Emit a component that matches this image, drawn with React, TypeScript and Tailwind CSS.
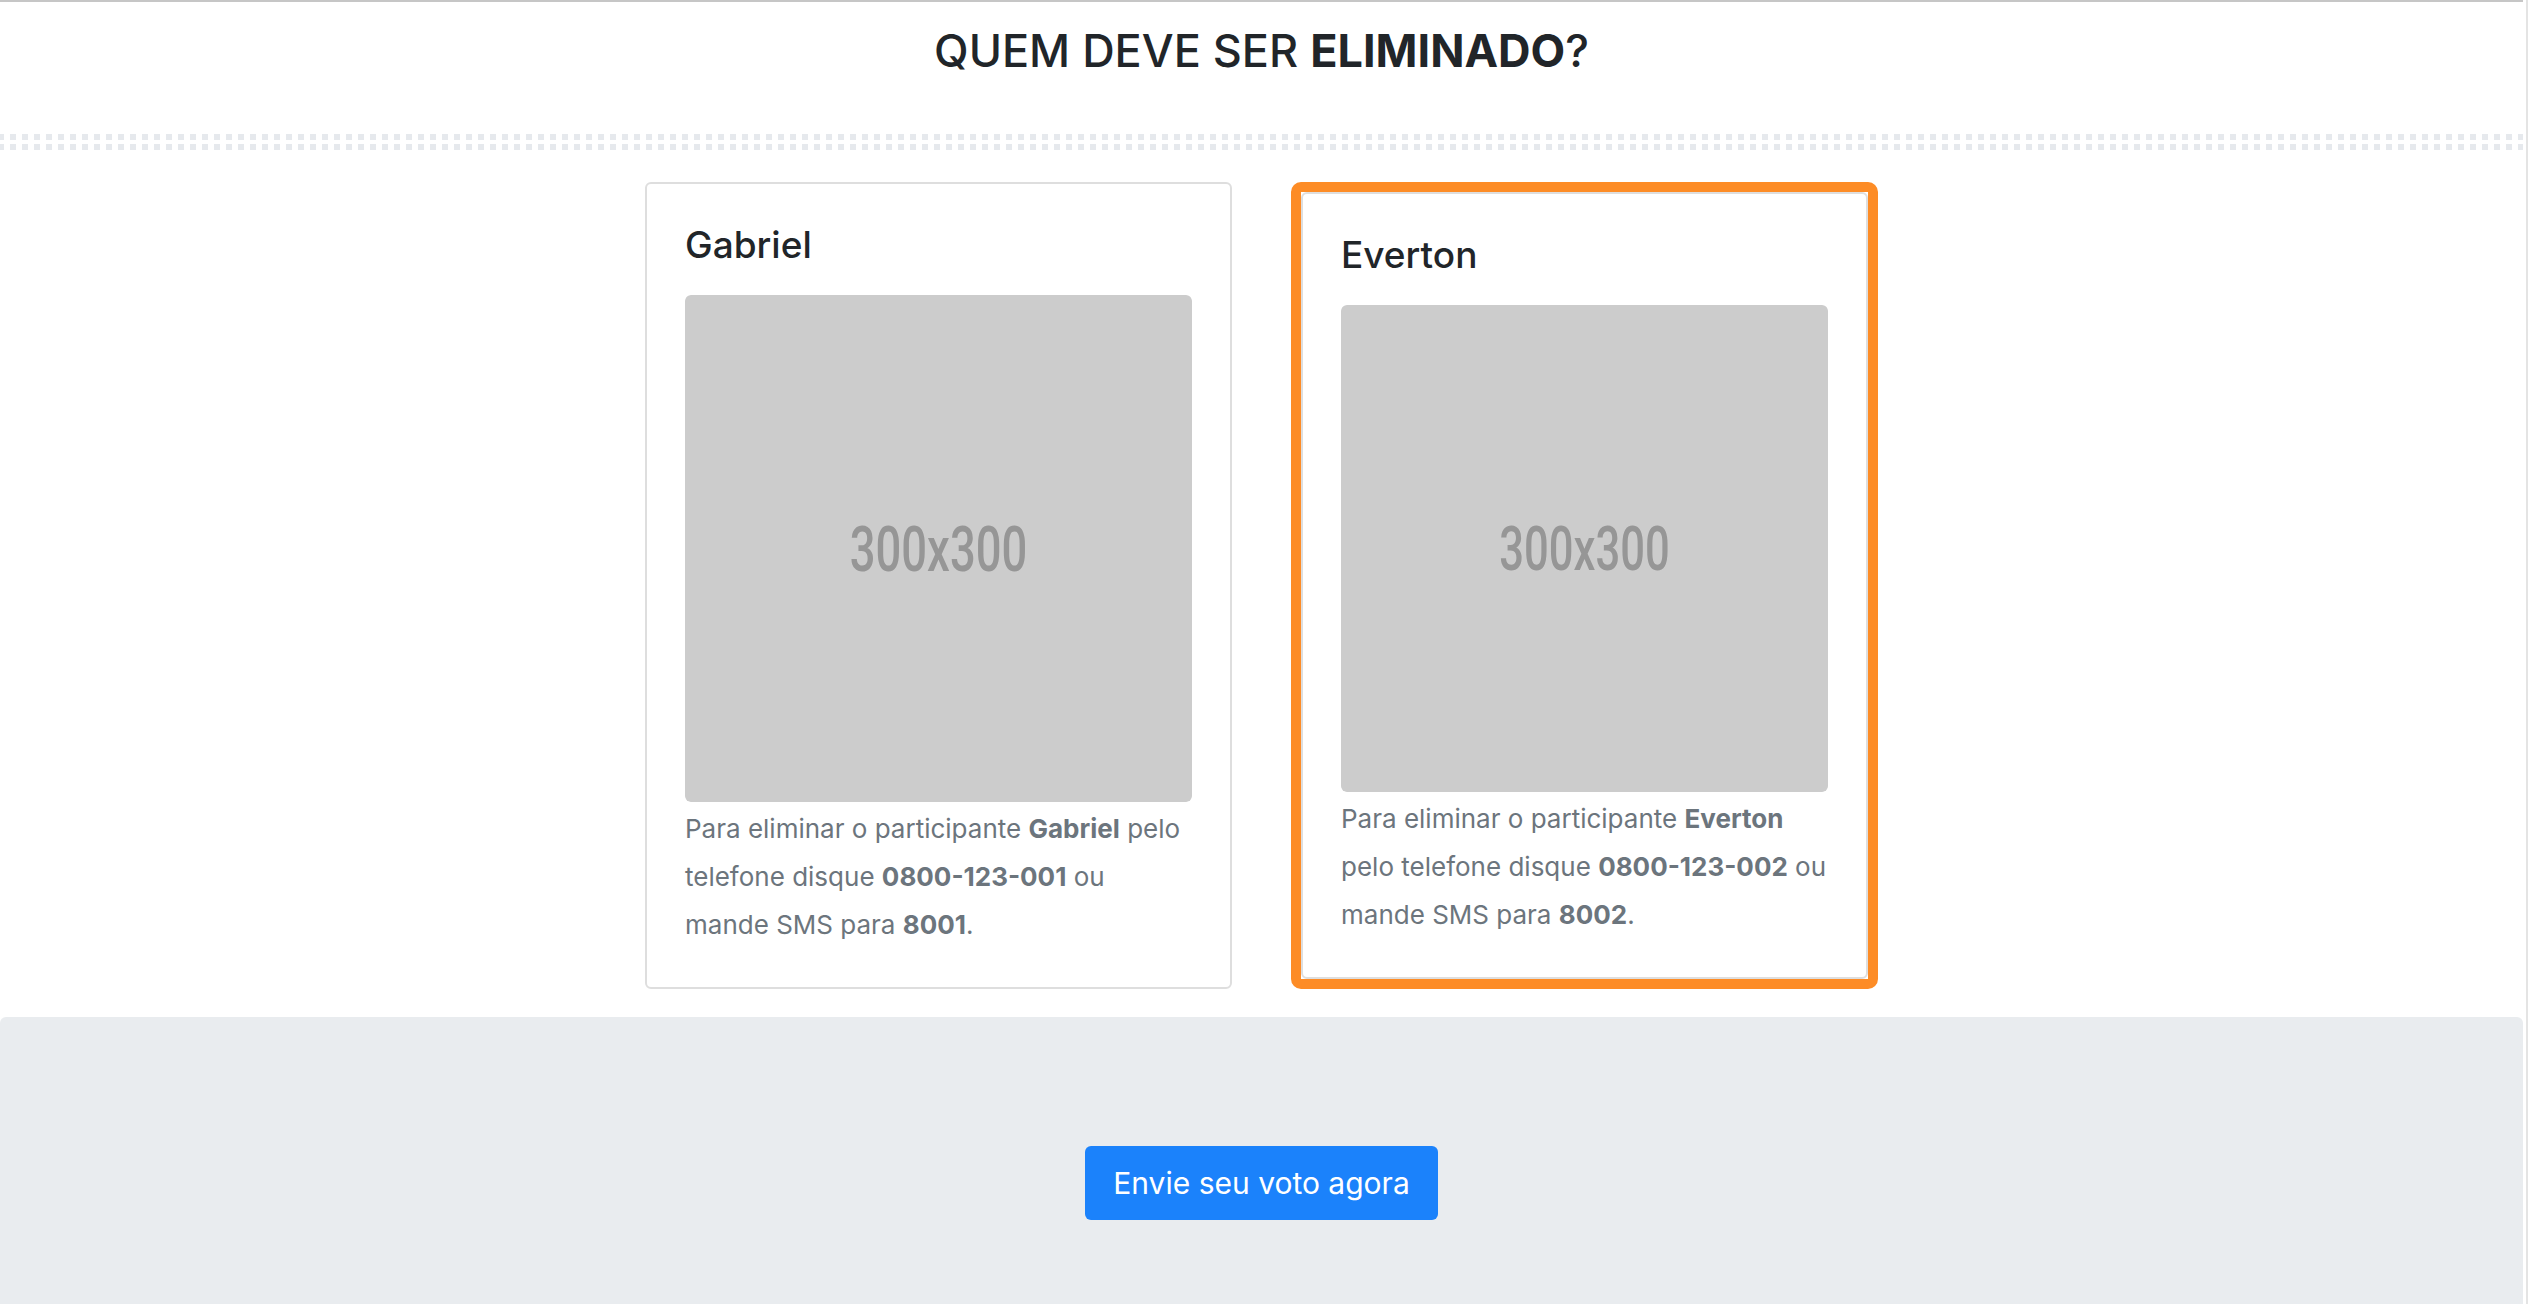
import React from 'react'

type Participante = {
  nome: string
  telefone: string
  sms: string
}

const participantes: Participante[] = [
  { nome: 'Gabriel', telefone: '0800-123-001', sms: '8001' },
  { nome: 'Everton', telefone: '0800-123-002', sms: '8002' },
]

function Placeholder() {
  return (
    <svg viewBox="0 0 300 300" className="block w-full aspect-square rounded-[6px]">
      <rect width="300" height="300" rx="3" fill="#cccccc" />
      <text
        x="150"
        y="163.5"
        textAnchor="middle"
        fontFamily="Roboto, 'Liberation Sans', sans-serif"
        fontWeight="500"
        fontSize="37.5"
        textLength="105"
        lengthAdjust="spacingAndGlyphs"
        fill="#969696"
      >
        300x300
      </text>
    </svg>
  )
}

function CardBody({ p }: { p: Participante }) {
  return (
    <>
      <h4 className="text-[37px] leading-[46px] font-medium text-[#212529]">{p.nome}</h4>
      <div className="mt-[27px]">
        <Placeholder />
      </div>
      <p className="mt-[3px] text-[26px] leading-[48px] text-[#6c757d]">
        Para eliminar o participante <b className="font-bold">{p.nome}</b> pelo telefone disque{' '}
        <b className="font-bold">{p.telefone}</b> ou mande SMS para <b className="font-bold">{p.sms}</b>.
      </p>
    </>
  )
}

export default function App() {
  return (
    <div className="flex min-h-screen bg-white font-['Inter','Noto_Sans',sans-serif]">
      <main className="flex-1 flex flex-col border-t-2 border-[#c6c6c6]">
        <h2 className="pt-[22px] text-center text-[45px] leading-[53px] font-medium text-[#212529]">
          QUEM DEVE SER <span className="font-bold">ELIMINADO</span>?
        </h2>

        <div className="mt-[57px] flex flex-col gap-[4px]">
          <div className="h-[6px] bg-[repeating-linear-gradient(90deg,#e6e9ed_0px,#e6e9ed_6px,transparent_6px,transparent_12px)] bg-[position:-2px_0]" />
          <div className="h-[6px] bg-[repeating-linear-gradient(90deg,#e6e9ed_0px,#e6e9ed_6px,transparent_6px,transparent_12px)] bg-[position:-2px_0]" />
        </div>

        <div className="mt-[32px] flex justify-center items-stretch gap-[59px]">
          <div className="w-[587px] border-2 border-[#dedede] rounded-[6px] p-[38px]">
            <CardBody p={participantes[0]} />
          </div>

          <div className="w-[587px] border-[10px] border-[#fd8c26] rounded-[10px]">
            <div className="h-full border-2 border-[#dedede] rounded-[6px] p-[38px]">
              <CardBody p={participantes[1]} />
            </div>
          </div>
        </div>

        <div className="mt-[28px] flex-1 bg-[#e9ecef] rounded-t-[6px] pt-[129px] pb-[85px] flex justify-center items-start">
          <button className="h-[74px] px-[28px] rounded-[6px] bg-[#1b82fb] text-white text-[30px] leading-none">
            Envie seu voto agora
          </button>
        </div>
      </main>
      <div className="w-[3px]" />
      <div className="w-[2px] bg-[#e4e4e4]" />
    </div>
  )
}
